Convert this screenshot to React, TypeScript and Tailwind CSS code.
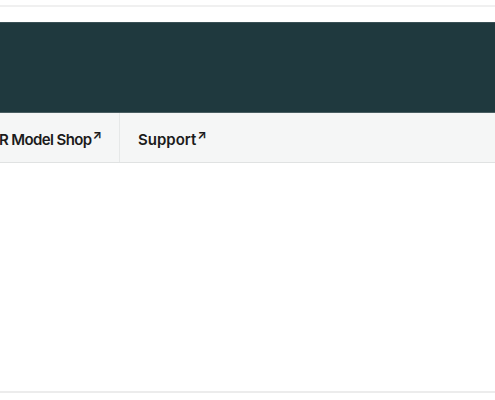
export default function App() {
  return (
    <div className="h-[400px] w-[495px] overflow-hidden bg-white" style={{ fontFamily: "Inter, 'Liberation Sans', sans-serif" }}>
      <div className="h-[5px]" />
      <div className="h-[2px] bg-[#f0f0f0]" />
      <div className="h-[15px]" />
      <header className="h-[90px] border-t border-[#3a5156] bg-[#1f393e]" />
      <nav className="flex h-[51px] border-t border-b border-[#4a5e62] border-b-[#e0e2e2] bg-[#f5f6f6] text-[15px] font-semibold text-[#1b1b1b]">
        <a className="flex w-[120px] shrink-0 items-center justify-end whitespace-nowrap border-r border-[#e6e8e8] pr-[17px] pt-[5px] tracking-[-0.6px]">
          R Model Shop
          <span className="relative -top-[5px] ml-[1px] text-[12px] font-bold tracking-normal">↗</span>
        </a>
        <a className="flex items-center whitespace-nowrap px-[18px] pt-[5px]">
          Support
          <span className="relative -top-[5px] ml-[1px] text-[12px] font-bold">↗</span>
        </a>
      </nav>
      <div className="h-[228px]" />
      <div className="h-[2px] bg-[#ececec]" />
    </div>
  );
}
